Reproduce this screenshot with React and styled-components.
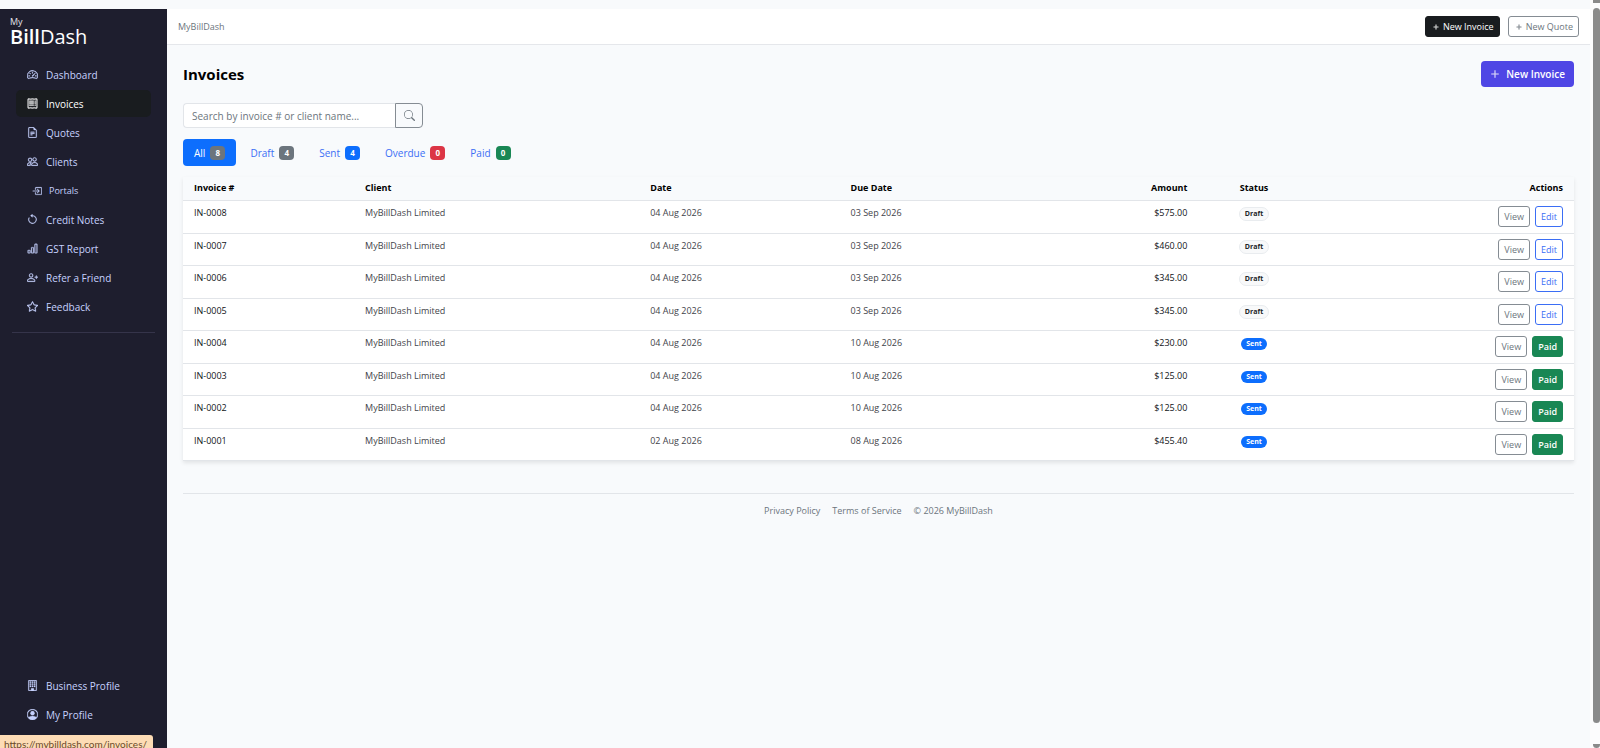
import React from "react";
import styled, { createGlobalStyle, css } from "styled-components";
import {
  BsArrowCounterclockwise,
  BsBarChart,
  BsBoxArrowInRight,
  BsBuilding,
  BsFileEarmarkText,
  BsPeople,
  BsPersonCircle,
  BsPersonPlus,
  BsPlus,
  BsPlusLg,
  BsReceipt,
  BsSearch,
  BsSpeedometer2,
  BsStar,
} from "react-icons/bs";

const colors = {
  sidebar: "#1e1e2e",
  active: "#191c1f",
  navText: "#c7d2fe",
  page: "#f8fafc",
  border: "#e2e5e9",
  blue: "#0d6efd",
  link: "#3b6ef5",
  indigo: "#4f46e5",
  gray: "#6c757d",
  red: "#dc3545",
  green: "#198754",
  dark: "#212529",
};

const mainNav = [
  { label: "Dashboard", icon: BsSpeedometer2 },
  { label: "Invoices", icon: BsReceipt, active: true },
  { label: "Quotes", icon: BsFileEarmarkText },
  { label: "Clients", icon: BsPeople },
  { label: "Portals", icon: BsBoxArrowInRight, sub: true },
  { label: "Credit Notes", icon: BsArrowCounterclockwise },
  { label: "GST Report", icon: BsBarChart },
  { label: "Refer a Friend", icon: BsPersonPlus },
  { label: "Feedback", icon: BsStar },
];

const accountNav = [
  { label: "Business Profile", icon: BsBuilding },
  { label: "My Profile", icon: BsPersonCircle },
];

const tabs = [
  { label: "All", count: 8, color: colors.gray, active: true },
  { label: "Draft", count: 4, color: colors.gray },
  { label: "Sent", count: 4, color: colors.blue },
  { label: "Overdue", count: 0, color: colors.red },
  { label: "Paid", count: 0, color: colors.green },
];

const client = "MyBillDash Limited";

const invoices = [
  { id: "IN-0008", date: "04 Aug 2026", due: "03 Sep 2026", amount: "$575.00", status: "Draft" },
  { id: "IN-0007", date: "04 Aug 2026", due: "03 Sep 2026", amount: "$460.00", status: "Draft" },
  { id: "IN-0006", date: "04 Aug 2026", due: "03 Sep 2026", amount: "$345.00", status: "Draft" },
  { id: "IN-0005", date: "04 Aug 2026", due: "03 Sep 2026", amount: "$345.00", status: "Draft" },
  { id: "IN-0004", date: "04 Aug 2026", due: "10 Aug 2026", amount: "$230.00", status: "Sent" },
  { id: "IN-0003", date: "04 Aug 2026", due: "10 Aug 2026", amount: "$125.00", status: "Sent" },
  { id: "IN-0002", date: "04 Aug 2026", due: "10 Aug 2026", amount: "$125.00", status: "Sent" },
  { id: "IN-0001", date: "02 Aug 2026", due: "08 Aug 2026", amount: "$455.40", status: "Sent" },
];

const NavList = ({ items }) => (
  <Nav>
    {items.map(({ label, icon: Icon, active, sub }) => (
      <NavLink key={label} href="#" $active={active} $sub={sub}>
        <Icon />
        {label}
      </NavLink>
    ))}
  </Nav>
);

const App = () => (
  <Window>
    <GlobalStyle />
    <Sidebar>
      <Brand href="#">
        <small>My</small>
        <span>
          <b>Bill</b>Dash
        </span>
      </Brand>
      <NavList items={mainNav} />
      <Divider />
      <NavList items={accountNav} />
    </Sidebar>
    <Main>
      <TopBar>
        <span>MyBillDash</span>
        <TopActions>
          <SmallButton $variant="dark">
            <BsPlus />
            New Invoice
          </SmallButton>
          <SmallButton $variant="outline">
            <BsPlus />
            New Quote
          </SmallButton>
        </TopActions>
      </TopBar>
      <Content>
        <TitleRow>
          <h1>Invoices</h1>
          <PrimaryButton>
            <BsPlusLg />
            New Invoice
          </PrimaryButton>
        </TitleRow>
        <Search>
          <input
            type="text"
            aria-label="Search invoices"
            placeholder="Search by invoice # or client name..."
          />
          <button type="button" aria-label="Search">
            <BsSearch />
          </button>
        </Search>
        <Tabs>
          {tabs.map((tab) => (
            <Tab key={tab.label} href="#" $active={tab.active}>
              {tab.label}
              <Count $color={tab.color}>{tab.count}</Count>
            </Tab>
          ))}
        </Tabs>
        <Table>
          <colgroup>
            <Col $width="12.3%" />
            <Col $width="20.5%" />
            <Col $width="14.4%" />
            <Col $width="14%" />
            <Col $width="11.8%" />
            <Col $width="8%" />
            <Col />
          </colgroup>
          <thead>
            <tr>
              <Th>Invoice #</Th>
              <Th>Client</Th>
              <Th>Date</Th>
              <Th>Due Date</Th>
              <Th $align="right">Amount</Th>
              <Th $align="center">Status</Th>
              <Th $align="right">Actions</Th>
            </tr>
          </thead>
          <tbody>
            {invoices.map((row) => (
              <tr key={row.id}>
                <Td $strong>{row.id}</Td>
                <Td>{client}</Td>
                <Td>{row.date}</Td>
                <Td>{row.due}</Td>
                <Td $strong $align="right">
                  {row.amount}
                </Td>
                <Td $align="center">
                  <Status $sent={row.status === "Sent"}>{row.status}</Status>
                </Td>
                <ActionsCell>
                  <div>
                    <SmallButton $variant="outline">View</SmallButton>
                    {row.status === "Sent" ? (
                      <SmallButton $variant="green">Paid</SmallButton>
                    ) : (
                      <SmallButton $variant="blue">Edit</SmallButton>
                    )}
                  </div>
                </ActionsCell>
              </tr>
            ))}
          </tbody>
        </Table>
        <Footer>
          <a href="#">Privacy Policy</a>
          <a href="#">Terms of Service</a>
          <span>© 2026 MyBillDash</span>
        </Footer>
      </Content>
    </Main>
    <ScrollTrack>
      <ScrollArrow $up />
      <ScrollThumb />
      <ScrollArrow />
    </ScrollTrack>
    <StatusUrl>https://mybilldash.com/invoices/</StatusUrl>
  </Window>
);

export default App;

const GlobalStyle = createGlobalStyle`
  * {
    box-sizing: border-box;
  }

  body {
    margin: 0;
    background: ${colors.page};
    color: ${colors.dark};
    font: 9px/16px "Open Sans", "Noto Sans", sans-serif;
  }

  button,
  input {
    font: inherit;
  }

  a {
    color: inherit;
    text-decoration: none;
  }
`;

const Window = styled.div`
  position: relative;
  display: flex;
  height: 100vh;
  padding-top: 9px;
  overflow: hidden;
`;

const Sidebar = styled.aside`
  display: flex;
  flex: 0 0 167px;
  flex-direction: column;
  padding: 8px 12px 20px;
  background: ${colors.sidebar};
`;

const Brand = styled.a`
  display: flex;
  flex-direction: column;
  margin: 0 -2px 14px;
  color: #fff;
  font-size: 20px;
  font-weight: 500;
  line-height: 20px;

  small {
    color: #e2e2ea;
    font-size: 9px;
    font-weight: 400;
    line-height: 10px;
  }

  b {
    font-weight: 600;
  }
`;

const Nav = styled.nav`
  display: flex;
  flex-direction: column;
  gap: 2px;
`;

const NavLink = styled.a`
  display: flex;
  align-items: center;
  gap: 8px;
  height: 27px;
  margin: 0 4px;
  padding: 0 11px;
  border-radius: 5px;
  color: ${colors.navText};
  font-size: 10px;
  font-weight: 500;

  svg {
    flex: none;
    width: 11px;
    height: 11px;
    stroke: currentColor;
    stroke-width: 0.4px;
  }

  ${(props) =>
    props.$active &&
    css`
      background: ${colors.active};
      color: #fff;
    `}

  ${(props) =>
    props.$sub &&
    css`
      gap: 7px;
      padding-left: 16px;
      font-size: 9px;

      svg {
        width: 10px;
        height: 10px;
      }
    `}
`;

const Divider = styled.hr`
  width: 100%;
  margin: 12px 0 auto;
  border: 0;
  border-top: 1px solid #35344a;
`;

const Main = styled.main`
  flex: 1;
  min-width: 0;
`;

const TopBar = styled.header`
  display: flex;
  align-items: center;
  justify-content: space-between;
  height: 36px;
  padding: 0 11px;
  border-bottom: 1px solid #e5e7eb;
  background: #fff;
  color: ${colors.gray};
`;

const TopActions = styled.div`
  display: flex;
  gap: 8px;
`;

const variants = {
  dark: css`
    background: #191c1f;
    border-color: #191c1f;
    color: #fff;
    font-weight: 500;
  `,
  outline: css`
    border-color: #858c93;
    color: ${colors.gray};
  `,
  blue: css`
    border-color: ${colors.link};
    color: ${colors.link};
  `,
  green: css`
    background: ${colors.green};
    border-color: ${colors.green};
    color: #fff;
    font-weight: 600;
  `,
};

const SmallButton = styled.button`
  display: flex;
  align-items: center;
  gap: 2px;
  height: 21px;
  padding: 0 5px;
  border: 1px solid;
  border-radius: 3px;
  background: #fff;
  font-size: 9px;
  line-height: 12px;

  svg {
    width: 10px;
    height: 10px;
    stroke: currentColor;
    stroke-width: 0.4px;
  }

  ${(props) => variants[props.$variant]}
`;

const Content = styled.div`
  padding: 16px;
`;

const TitleRow = styled.div`
  display: flex;
  align-items: center;
  justify-content: space-between;
  margin-bottom: 16px;

  h1 {
    margin: 0;
    color: #000;
    font-size: 15px;
    font-weight: 700;
    line-height: 20px;
  }
`;

const PrimaryButton = styled.button`
  display: flex;
  align-items: center;
  gap: 6px;
  height: 26px;
  padding: 0 9px;
  border: 0;
  border-radius: 4px;
  background: ${colors.indigo};
  color: #fff;
  font-size: 10px;
  font-weight: 600;

  svg {
    width: 10px;
    height: 10px;
    stroke: currentColor;
    stroke-width: 0.4px;
  }
`;

const Search = styled.form`
  display: flex;
  width: 240px;
  height: 25px;
  margin-bottom: 11px;

  input {
    flex: 1;
    min-width: 0;
    padding: 0 8px;
    border: 1px solid ${colors.border};
    border-right: 0;
    border-radius: 4px 0 0 4px;
    background: #fff;
    font-size: 10px;
  }

  input::placeholder {
    color: ${colors.gray};
    opacity: 1;
  }

  button {
    display: grid;
    place-items: center;
    width: 28px;
    padding: 0;
    border: 1px solid #858c93;
    border-radius: 0 4px 4px 0;
    background: transparent;
    color: ${colors.gray};
    font-size: 11px;
  }
`;

const Tabs = styled.nav`
  display: flex;
  gap: 3px;
  margin-bottom: 11px;
`;

const Tab = styled.a`
  display: flex;
  align-items: center;
  gap: 5px;
  height: 27px;
  padding: 0 11px;
  border-radius: 4px;
  color: ${colors.link};
  font-size: 10px;

  ${(props) =>
    props.$active &&
    css`
      background: ${colors.blue};
      color: #fff;
      font-weight: 500;
    `}
`;

const Count = styled.span`
  min-width: 15px;
  border-radius: 4px;
  background: ${(props) => props.$color};
  color: #fff;
  font-size: 8px;
  font-weight: 700;
  line-height: 14px;
  text-align: center;
`;

const Table = styled.table`
  width: 100%;
  table-layout: fixed;
  border-collapse: separate;
  border-spacing: 0;
  box-shadow: 0 2px 4px rgba(0, 0, 0, 0.09);

  /* rows alternate so that the pitch averages out between 32 and 33 */
  tbody tr {
    height: 33px;
  }

  tbody tr:nth-child(even) {
    height: 32px;
  }
`;

const Col = styled.col`
  width: ${(props) => props.$width || "auto"};
`;

const Th = styled.th`
  padding: 3px 11px 4px;
  border-bottom: 1px solid ${colors.border};
  background: ${colors.page};
  color: #000;
  font-weight: 700;
  text-align: ${(props) => props.$align || "left"};
`;

const Td = styled.td`
  padding: 4px 11px 0;
  border-bottom: 1px solid ${colors.border};
  background: #fff;
  color: ${(props) => (props.$strong ? "#111418" : "#3f444a")};
  font-weight: ${(props) => (props.$strong ? 500 : 400)};
  text-align: ${(props) => props.$align || "left"};
  vertical-align: top;
`;

const ActionsCell = styled(Td)`
  padding-top: 5px;

  div {
    display: flex;
    justify-content: flex-end;
    gap: 5px;
  }
`;

const Status = styled.span`
  display: inline-block;
  padding: 0 5px;
  border: 1px solid #e9ecef;
  border-radius: 7px;
  background: #f8f9fa;
  color: ${colors.dark};
  font-size: 7px;
  font-weight: 700;
  line-height: 12px;

  ${(props) =>
    props.$sent &&
    css`
      border: 0;
      background: ${colors.blue};
      color: #fff;
    `}
`;

const Footer = styled.footer`
  display: flex;
  justify-content: center;
  gap: 12px;
  margin-top: 32px;
  padding-top: 9px;
  border-top: 1px solid ${colors.border};
  color: ${colors.gray};
`;

const ScrollTrack = styled.div`
  display: flex;
  flex: 0 0 10px;
  flex-direction: column;
  align-items: flex-end;
  justify-content: space-between;
  margin-top: -9px;
  background: #fcfcfd;
`;

const ScrollThumb = styled.div`
  flex: 1;
  width: 7px;
  margin: 5px 0 21px;
  border-radius: 4px;
  background: #8a8a8a;
`;

const ScrollArrow = styled.div`
  width: 7px;
  height: ${(props) => (props.$up ? 3 : 4)}px;
  border-radius: ${(props) => (props.$up ? "0" : "0 0 4px 4px")};
  background: #8a8a8a;
`;

const StatusUrl = styled.div`
  position: absolute;
  bottom: 0;
  left: 0;
  height: 13px;
  padding: 0 6px 0 4px;
  overflow: hidden;
  border-radius: 0 3px 0 0;
  background: #fddcb5;
  color: #6b4a2b;
  font-family: Lato, "Open Sans", sans-serif;
  font-size: 10px;
  line-height: 18px;
`;
